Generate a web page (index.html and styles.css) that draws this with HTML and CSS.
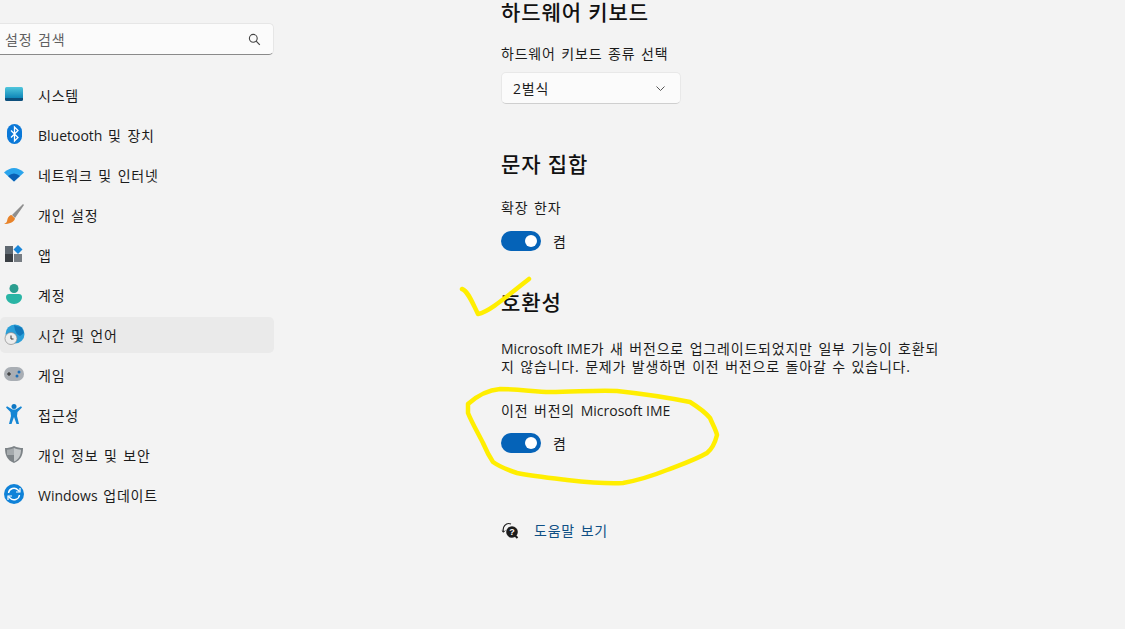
FILE: index.html
```html
<!DOCTYPE html>
<html lang="ko">

<head>
    <meta charset="UTF-8">
    <title>설정</title>
    <link rel="stylesheet" href="styles.css">
</head>

<body>
    <div class="app">
        <!-- Left navigation -->
        <aside class="sidebar">
            <div class="search">
                <span>설정 검색</span>
                <svg width="13" height="13" viewBox="0 0 13 13"><circle cx="5.3" cy="5.3" r="3.9" fill="none" stroke="#444" stroke-width="1.1"/><path d="M8.2 8.2l3.6 3.6" stroke="#444" stroke-width="1.2"/></svg>
            </div>
            <nav class="nav">
                <a class="nav-item">
                    <svg class="nav-icon" viewBox="0 0 20 20"><defs><linearGradient id="sys" x1="0" y1="0" x2="0" y2="1"><stop offset="0" stop-color="#4fc6dc"/><stop offset=".78" stop-color="#0f86b8"/><stop offset=".8" stop-color="#0d4f7c"/></linearGradient></defs><rect x="1" y="2" width="18" height="14" rx="1.500" fill="url(#sys)"/></svg>
                    <span>시스템</span>
                </a>
                <a class="nav-item">
                    <svg class="nav-icon" viewBox="0 0 20 20"><rect x="3" y="-1" width="15" height="20" rx="7.500" fill="#0a78d8"/><path d="M7 5.500l7 7-3.500 3.500V2l3.500 3.500-7 7" fill="none" stroke="#fff" stroke-width="1.300"/></svg>
                    <span><span class="latin">Bluetooth</span> 및 장치</span>
                </a>
                <a class="nav-item">
                    <svg class="nav-icon" viewBox="0 0 20 20"><path d="M0 7.500Q10-1.500 20 7.500L10 16.500z" fill="#2aa4ec"/><path d="M4 11Q10 6 16 11L10 16.500z" fill="#0a5fb4"/></svg>
                    <span>네트워크 및 인터넷</span>
                </a>
                <a class="nav-item">
                    <svg class="nav-icon" viewBox="0 0 20 20"><path d="M19 -1L8 10l3 3L20 0z" fill="#8f8f8f"/><path d="M7.500 10l3.500 3.500c-1 4-6 5.500-11 5.500 3-1 3-3 3.500-5 .5-2 2.500-4 4-4z" fill="#e8832a"/></svg>
                    <span>개인 설정</span>
                </a>
                <a class="nav-item">
                    <svg class="nav-icon" viewBox="0 0 20 20"><rect x="1" y="1" width="8" height="8" fill="#5f6870"/><rect x="1" y="9" width="8" height="8" fill="#3a3f44"/><rect x="10" y="9" width="8" height="8" fill="#777d83"/><path d="M14 0l4.500 4.500L14 9 9.500 4.500z" fill="#1a86d8"/></svg>
                    <span>앱</span>
                </a>
                <a class="nav-item">
                    <svg class="nav-icon" viewBox="0 0 20 20"><circle cx="10" cy="3.500" r="4.500" fill="#2a9d8f"/><path d="M2 12c0-2 1.500-3 3-3h10c1.500 0 3 1 3 3 0 4-4 7-8 7s-8-3-8-7z" fill="#2ab5a5"/></svg>
                    <span>계정</span>
                </a>
                <a class="nav-item active">
                    <svg class="nav-icon" viewBox="0 0 20 20"><circle cx="11" cy="9" r="9.500" fill="#2a9fd8"/><path d="M10 0c3 2 6 1 8 3l2 5-4 3-3-2-2-4z" fill="#1279bb"/><circle cx="7" cy="13.500" r="6" fill="#ececec" stroke="#8a8a8a" stroke-width=".7"/><path d="M7 10.500v3.500h2.500" fill="none" stroke="#333" stroke-width="1"/></svg>
                    <span>시간 및 언어</span>
                </a>
                <a class="nav-item">
                    <svg class="nav-icon" viewBox="0 0 20 20"><rect x="0" y="2" width="20" height="14" rx="7" fill="#a9aeb4"/><path d="M3 9h4M5 7v4" stroke="#222" stroke-width="1"/><circle cx="15" cy="7" r="1.500" fill="#1f6fb8"/><circle cx="13" cy="11" r="1.500" fill="#1f6fb8"/></svg>
                    <span>게임</span>
                </a>
                <a class="nav-item">
                    <svg class="nav-icon" viewBox="0 0 20 20"><circle cx="10" cy="1.500" r="2.500" fill="#0f78c4"/><path d="M2 2.500l1-1.300L8.500 4.500h3L17 1.200l1 1.300L13.500 7l-.5 4 2 8h-2.500L10 12l-2.500 7H5l2-8-.5-4z" fill="#1586d4"/></svg>
                    <span>접근성</span>
                </a>
                <a class="nav-item">
                    <svg class="nav-icon" viewBox="0 0 20 20"><path d="M10 1c3 1.500 6 2 9 2 0 7-2 12-9 15C3 15 1 10 1 3c3 0 6-.5 9-2z" fill="#7d8387"/><path d="M10 3c2.500 1.200 5 1.700 7 1.700 0 5-2 9.800-7 11.800z" fill="#c4c8ca"/><path d="M10 3v7H3V4.700c2 0 4.500-.5 7-1.700z" fill="#a5aaad"/></svg>
                    <span>개인 정보 및 보안</span>
                </a>
                <a class="nav-item">
                    <svg class="nav-icon" viewBox="0 0 20 20"><circle cx="10" cy="9" r="10" fill="#0f82d8"/><path d="M4.500 8a5.500 5.500 0 0 1 9.500-3l1.500 1.500M15.500 10a5.500 5.500 0 0 1-9.500 3L4.500 11.500" fill="none" stroke="#fff" stroke-width="1.400"/><path d="M16 3v4h-4M4 15v-4h4" fill="none" stroke="#fff" stroke-width="1.200"/></svg>
                    <span><span class="latin">Windows</span> 업데이트</span>
                </a>
            </nav>
        </aside>

        <!-- Main content -->
        <main class="content">
            <h2 class="first-title">하드웨어 키보드</h2>
            <p class="label">하드웨어 키보드 종류 선택</p>
            <div class="select">
                <span>2벌식</span>
                <svg width="9" height="5" viewBox="0 0 9 5"><path d="M.5.500L4.500 4.500 8.500.5" fill="none" stroke="#555" stroke-width="1"/></svg>
            </div>

            <h2 class="charset-title">문자 집합</h2>
            <p class="label">확장 한자</p>
            <div class="toggle-row">
                <span class="toggle"></span>
                <span>켬</span>
            </div>

            <h2 class="compat-title">호환성</h2>
            <p class="desc"><span class="latin">Microsoft IME</span>가 새 버전으로 업그레이드되었지만 일부 기능이 호환되<br>지 않습니다. 문제가 발생하면 이전 버전으로 돌아갈 수 있습니다.</p>
            <p class="label legacy">이전 버전의 <span class="latin">Microsoft IME</span></p>
            <div class="toggle-row legacy-toggle">
                <span class="toggle"></span>
                <span>켬</span>
            </div>

            <div class="help">
                <svg width="19" height="19" viewBox="0 0 19 19"><path d="M2.500 11C1 6 5 1 10 3" fill="none" stroke="#222" stroke-width="1.200"/><path d="M.8 9.500l1.700 1.700 1.700-1.700" fill="none" stroke="#222" stroke-width="1"/><circle cx="11" cy="11" r="5.800" fill="#1c1c1c"/><path d="M14 14.500l2.500 2.500" stroke="#1c1c1c" stroke-width="2"/><text class="help-mark" x="11" y="14.300" text-anchor="middle">?</text></svg>
                <a class="help-link">도움말 보기</a>
            </div>
        </main>
    </div>

    <!-- Yellow marker annotations on top of the screenshot -->
    <svg class="marker" width="1125" height="629" viewBox="0 0 1125 629">
        <path d="M462 289C468 291 472 302 478 314C488 312 500 302 529 279" />
        <path d="M468 404C478 395 488 390 500 389C520 389 535 392 550 392C575 392 595 390 617 391C645 394 670 398 690 402C698 407 705 412 710 418C713 425 716 430 717 435C715 443 712 449 707 453C695 460 680 465 667 470C652 476 640 480 623 483C605 484 585 482 567 480C550 478 532 476 517 473C508 470 500 467 493 462C489 456 486 450 483 443C478 433 472 423 468 413Z" />
    </svg>
</body>

</html>
```

FILE: styles.css
```css
/* General page styles */
* {
    box-sizing: border-box;
}

body {
    margin: 0;
    width: 1125px;
    height: 629px;
    overflow: hidden;
    background-color: #f3f3f3;
    color: #1b1b1b;
    font-family: "Open Sans", "Noto Sans CJK KR", sans-serif;
    font-size: 14px;
    letter-spacing: .8px;
    word-spacing: 1.200px;
}

/* Latin words keep the font's own spacing */
.latin {
    letter-spacing: 0;
    word-spacing: 0;
}

.app {
    display: flex;
    height: 100%;
}

/* Sidebar */
.sidebar {
    width: 501px;
    flex-shrink: 0;
    padding-top: 23px;
}

.search {
    width: 278px;
    height: 32px;
    margin-left: -4px;
    padding: 0 12px 0 8px;
    display: flex;
    align-items: center;
    justify-content: space-between;
    background-color: #fbfbfb;
    border: 1px solid #e6e6e6;
    border-bottom: 1px solid #8a8a8a;
    border-radius: 5px;
    color: #5f5f5f;
}

.nav {
    margin-top: 20px;
    display: flex;
    flex-direction: column;
}

.nav-item {
    width: 274px;
    height: 40px;
    display: flex;
    align-items: center;
    gap: 14px;
    padding-left: 4px;
    border-radius: 5px;
}

.nav-item.active {
    height: 36px;
    margin: 2px 0;
    background-color: #eaeaea;
}

.nav-icon {
    width: 20px;
    height: 20px;
    flex-shrink: 0;
    overflow: visible;
}

/* Main column */
.content {
    flex: 1;
}

h2 {
    margin: 0;
    font-size: 21px;
    font-weight: 500;
    line-height: 28px;
    letter-spacing: .9px;
    word-spacing: 0;
    color: #111;
}

.first-title {
    line-height: 24px;
    margin-bottom: 3px;
}

.charset-title {
    margin-top: 46px;
}

.compat-title {
    margin-top: 37px;
}

.label,
.desc {
    margin: 0;
    line-height: 20px;
}

.label {
    margin-top: 20px;
}

.desc {
    margin-top: 24px;
    line-height: 18px;
}

.label.legacy {
    margin-top: 25px;
}

.select {
    width: 180px;
    height: 32px;
    margin-top: 8px;
    padding: 0 15px 0 11px;
    display: flex;
    align-items: center;
    justify-content: space-between;
    background-color: #fbfbfb;
    border: 1px solid #e8e8e8;
    border-bottom-color: #cfcfcf;
    border-radius: 5px;
}

.toggle-row {
    margin-top: 13px;
    height: 20px;
    display: flex;
    align-items: center;
    gap: 12px;
}

.legacy-toggle {
    margin-top: 12px;
}

.toggle {
    position: relative;
    width: 40px;
    height: 20px;
    border-radius: 10px;
    background-color: #0563b8;
}

/* Knob sits over the track */
.toggle::after {
    content: "";
    position: absolute;
    top: 4px;
    right: 4px;
    width: 12px;
    height: 12px;
    border-radius: 50%;
    background-color: #fff;
}

.help {
    margin-top: 67px;
    display: flex;
    align-items: center;
    gap: 14px;
}

.help-link {
    color: #0f4f85;
}

.help-mark {
    fill: #fff;
    font-family: "Liberation Sans", sans-serif;
    font-size: 9px;
    font-weight: bold;
    letter-spacing: 0;
}

/* Hand-drawn marker strokes */
.marker {
    position: absolute;
    top: 0;
    left: 0;
}

.marker path {
    fill: none;
    stroke: #ffee00;
    stroke-width: 4.500;
    stroke-linecap: round;
    stroke-linejoin: round;
}
```
